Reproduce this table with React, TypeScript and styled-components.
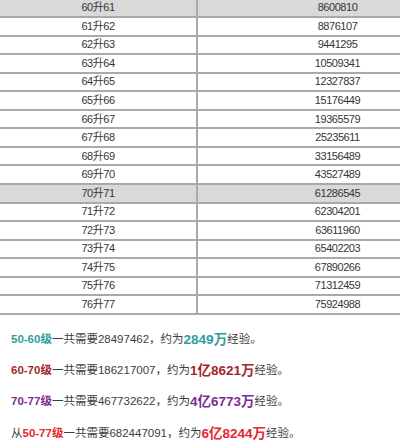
import styled, { createGlobalStyle } from "styled-components";

const GlobalStyle = createGlobalStyle`
  html, body {
    margin: 0;
    padding: 0;
    background: #ffffff;
    overflow: hidden;
  }
  body {
    width: 400px;
    height: 446px;
  }
`;

const Page = styled.div`
  width: 400px;
  height: 446px;
  overflow: hidden;
  font-family: "Liberation Sans", "Noto Sans CJK SC", sans-serif;
`;

const Table = styled.div`
  width: 477px;
  margin-top: -0.5px;
  display: flex;
  flex-direction: column;
`;

const Row = styled.div<{ $shade?: boolean }>`
  display: grid;
  grid-template-columns: 198px 279px;
  height: 18.56px;
  box-sizing: border-box;
  border-bottom: 2px solid #a9a9a9;
  background: ${(p) => (p.$shade ? "#d9d9d9" : "#ffffff")};
`;

const Cell = styled.div<{ $divider?: boolean }>`
  display: flex;
  align-items: center;
  justify-content: center;
  box-sizing: border-box;
  border-right: ${(p) => (p.$divider ? "2px solid #a9a9a9" : "none")};
  font-size: 11px;
  letter-spacing: -0.45px;
  color: #363636;
  line-height: 1;
`;

const Notes = styled.div`
  padding: 7.5px 0 0 11px;
  display: flex;
  flex-direction: column;
`;

const Line = styled.div<{ $h: number }>`
  height: ${(p) => p.$h}px;
  display: flex;
  align-items: center;
  font-size: 11.5px;
  color: #3d3d3d;
  white-space: nowrap;
`;

const Label = styled.span<{ $color: string }>`
  font-weight: bold;
  color: ${(p) => p.$color};
`;

const Big = styled.span<{ $color: string }>`
  font-weight: bold;
  font-size: 13.5px;
  color: ${(p) => p.$color};
`;

const rows: [string, string][] = [
  ["60升61", "8600810"],
  ["61升62", "8876107"],
  ["62升63", "9441295"],
  ["63升64", "10509341"],
  ["64升65", "12327837"],
  ["65升66", "15176449"],
  ["66升67", "19365579"],
  ["67升68", "25235611"],
  ["68升69", "33156489"],
  ["69升70", "43527489"],
  ["70升71", "61286545"],
  ["71升72", "62304201"],
  ["72升73", "63611960"],
  ["73升74", "65402203"],
  ["74升75", "67890266"],
  ["75升76", "71312459"],
  ["76升77", "75924988"],
];

const TEAL = "#2f9d9f";
const MAROON = "#a3262b";
const PURPLE = "#7c2d8f";
const RED = "#e8262c";

export default function App() {
  return (
    <Page>
      <GlobalStyle />
      <Table>
        {rows.map(([lvl, exp], i) => (
          <Row key={lvl} $shade={i === 0 || i === 10}>
            <Cell $divider>{lvl}</Cell>
            <Cell>{exp}</Cell>
          </Row>
        ))}
      </Table>
      <Notes>
        <Line $h={31}>
          <Label $color={TEAL}>50-60级</Label>一共需要28497462，约为
          <Big $color={TEAL}>2849万</Big>经验。
        </Line>
        <Line $h={31}>
          <Label $color={MAROON}>60-70级</Label>一共需要186217007，约为
          <Big $color={MAROON}>1亿8621万</Big>经验。
        </Line>
        <Line $h={31}>
          <Label $color={PURPLE}>70-77级</Label>一共需要467732622，约为
          <Big $color={PURPLE}>4亿6773万</Big>经验。
        </Line>
        <Line $h={33}>
          从<Label $color={RED}>50-77级</Label>一共需要682447091，约为
          <Big $color={RED}>6亿8244万</Big>经验。
        </Line>
      </Notes>
    </Page>
  );
}
